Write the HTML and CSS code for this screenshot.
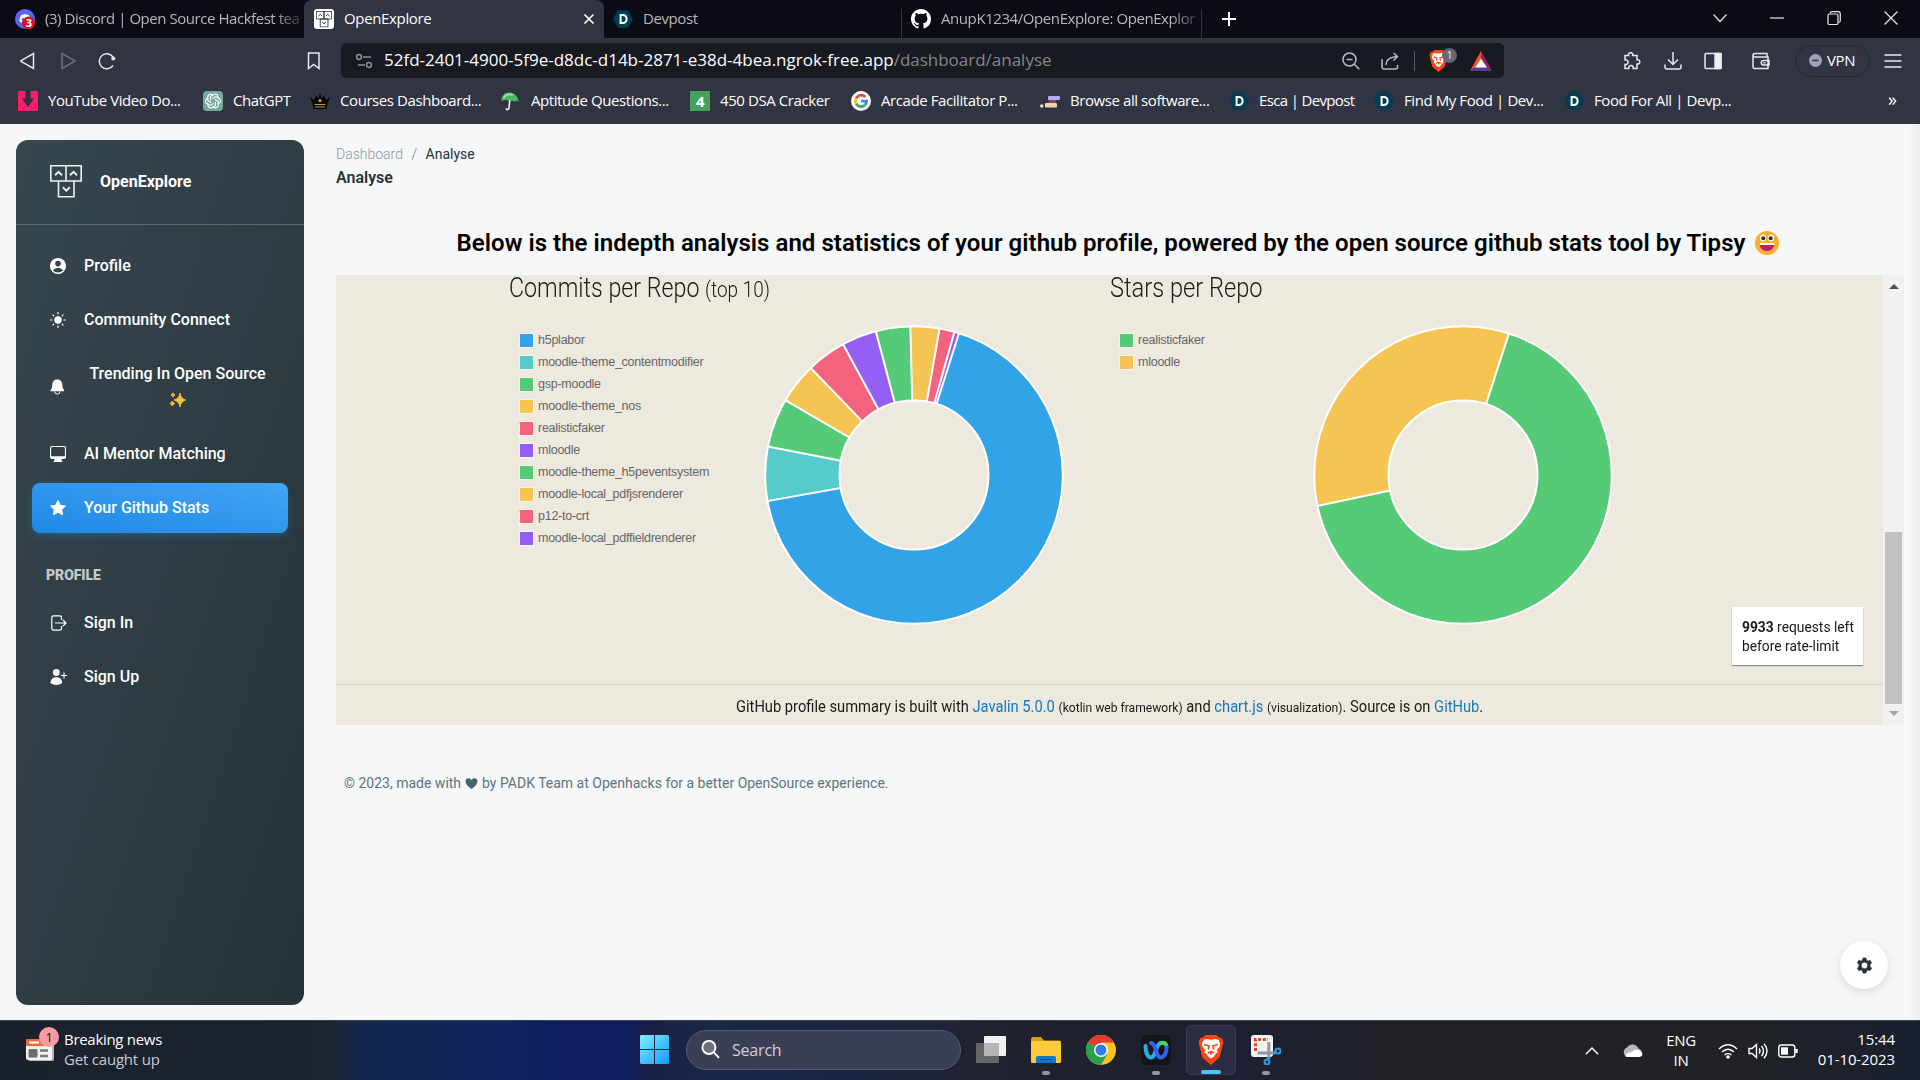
FILE: index.html
```html
<!DOCTYPE html>
<html lang="en">
<head>
<meta charset="utf-8">
<title>OpenExplore</title>
<link rel="stylesheet" href="styles.css">
</head>
<body>
<svg class="defs" width="0" height="0" aria-hidden="true">
  <symbol id="devpost" viewBox="0 0 20 20"><path d="M5 1.2h10L20 10l-5 8.800H5L0 10z" fill="#003e54"/><path d="M7.600 6v8h1.800c2.800 0 4.200-1.500 4.200-4s-1.400-4-4.200-4z" fill="none" stroke="#fff" stroke-width="2"/></symbol>
  <symbol id="logo" viewBox="0 0 32 33"><g fill="none" stroke="currentColor" stroke-width="1.600"><path d="M.8.8h15.200v15.200H.8zM16 .8h15.200v15.200H16zM8.500 16h15.500v15.800H8.500z"/><path d="M5 10.200l3.500-3.400 3.500 3.400M20 10.200l3.500-3.400 3.500 3.400M12.800 22.300l3.500 3.400 3.500-3.400" stroke-width="1.900"/></g></symbol>
  <symbol id="brave" viewBox="0 0 24 28"><path d="M7 0h10l2.500 2.200 2.500.8 1.500 3-.5 3-3 12L12 28 4 21 1 9 .5 6 2 3l2.500-.8z" fill="#fb4412"/><path d="M12 4.500l4-.8 3 .8 1.500 4-.5 2.500-2.500 3 .8 2-2 1.500-1.500 2.500L12 22l-2.800-2-1.500-2.500-2-1.500.8-2L4 11l-.5-2.500 1.500-4 3-.8z" fill="#fff"/><path d="M5.500 8.800l4.700 1.400-.8 3.300M18.500 8.800l-4.700 1.400.8 3.300M9 16.800l3-1.300 3 1.300M12 15.500v3" fill="none" stroke="#fb4412" stroke-width="1.500"/></symbol>
</svg>

<header class="browser">
  <div class="tabs">
    <div class="tab tab-first">
      <svg class="fav" viewBox="0 0 20 20"><circle cx="10" cy="10" r="10" fill="#5865f2"/><path d="M4.500 12.500c0-3 .8-5.500 2-6.500 2-1 5-1 7 0 1 1 2 3 2 6l-3 2H7z" fill="#fff"/><circle cx="7.800" cy="10.200" r="1.200" fill="#5865f2"/><circle cx="13.500" cy="14" r="6.500" fill="#d9131e"/><text x="10.800" y="18" class="badge-num">3</text></svg>
      <span class="tab-title">(3) Discord | Open Source Hackfest tea</span>
    </div>
    <div class="tab tab-active">
      <svg class="fav fav-logo" viewBox="0 0 20 20"><rect width="20" height="20" rx="3" fill="#fff"/><use href="#logo" x="2" y="2" width="16" height="16.500"/></svg>
      <span class="tab-title">OpenExplore</span>
      <svg class="tab-close" viewBox="0 0 12 12"><path d="M1.500 1.500l9 9M10.500 1.500l-9 9" stroke="#fff" stroke-width="1.700"/></svg>
    </div>
    <div class="tab tab-devpost">
      <svg class="fav"><use href="#devpost"/></svg>
      <span class="tab-title">Devpost</span>
    </div>
    <div class="tab tab-github">
      <svg class="fav" viewBox="0 0 16 16"><path fill="#fff" d="M8 0C3.580 0 0 3.580 0 8c0 3.540 2.290 6.530 5.470 7.590.4.070.55-.17.55-.38 0-.19-.01-.82-.01-1.490-2.010.37-2.530-.49-2.690-.94-.09-.23-.48-.94-.82-1.130-.28-.15-.68-.52-.01-.53.63-.01 1.080.58 1.230.82.72 1.210 1.870.87 2.330.66.070-.52.280-.87.510-1.070-1.780-.2-3.640-.89-3.640-3.950 0-.87.31-1.590.82-2.150-.08-.2-.36-1.020.08-2.120 0 0 .67-.21 2.200.82.640-.18 1.320-.27 2-.27s1.360.09 2 .27c1.530-1.040 2.200-.82 2.200-.82.44 1.100.16 1.920.08 2.120.51.560.82 1.270.82 2.150 0 3.070-1.870 3.750-3.650 3.950.29.25.54.730.54 1.480 0 1.070-.01 1.930-.01 2.200 0 .21.150.46.550.38A8.010 8.010 0 0016 8c0-4.420-3.580-8-8-8z"/></svg>
      <span class="tab-title">AnupK1234/OpenExplore: OpenExplor</span>
    </div>
    <svg class="tab-new" viewBox="0 0 16 16"><path d="M8 1v14M1 8h14" stroke="#fff" stroke-width="2"/></svg>
    <div class="window-controls">
      <svg viewBox="0 0 14 14"><path d="M.5 3.500L7 10.500l6.500-7"/></svg>
      <svg viewBox="0 0 14 14"><path d="M0 7h14"/></svg>
      <svg viewBox="0 0 14 14"><rect x="1" y="3" width="10" height="10.500" rx="1.500"/><path d="M3 2.500Q3.500.7 5 .7h6q2.300 0 2.300 2.300v6.500q0 1.500-1.500 2"/></svg>
      <svg viewBox="0 0 14 14"><path d="M.5.5l13 13M13.500.5l-13 13"/></svg>
    </div>
  </div>

  <div class="toolbar">
    <svg class="ti" viewBox="0 0 18 18"><path d="M14.500 1.500v15L2 9.300q-.5-.3 0-.6z"/></svg>
    <svg class="ti dim" viewBox="0 0 18 18"><path d="M2 1.500v15L14.500 9.300q.5-.3 0-.6z"/></svg>
    <svg class="ti" viewBox="0 0 18 18"><path d="M15 13.500A7.500 7.500 0 1 1 15.500 6"/><circle cx="15.300" cy="6.500" r="2" fill="#e8e8ee" stroke="none"/></svg>
    <svg class="ti" viewBox="0 0 18 18"><path d="M1.500 1h10.500v15.500l-5.200-4-5.300 4z"/></svg>
    <div class="urlbar">
      <svg class="ti gray" viewBox="0 0 18 18"><circle cx="4" cy="5" r="2.400"/><path d="M8 5h8M3 13h7"/><circle cx="14" cy="13" r="2.400"/></svg>
      <span class="url"><span class="host">52fd-2401-4900-5f9e-d8dc-d14b-2871-e38d-4bea.ngrok-free.app</span><span class="path">/dashboard/analyse</span></span>
      <svg class="ti light" viewBox="0 0 18 18"><circle cx="7.500" cy="7.500" r="6.500"/><path d="M4.500 7.500h6M12.300 12.300l5 5"/></svg>
      <svg class="ti light" viewBox="0 0 18 18"><path d="M1 7v8q0 2 2 2h11.500q2 0 2-2v-2M5 13c0-6 4-8 11-8.500M12.500 1l4 3.500-4 4"/></svg>
      <i class="sep"></i>
      <span class="shield"><svg viewBox="0 0 24 28"><use href="#brave"/></svg><b>1</b></span>
      <svg class="bat" viewBox="0 0 22 20"><path d="M11 0L0 20l5-3.500 6-9z" fill="#f9522b"/><path d="M11 0l11 20-5-3.500-6-9z" fill="#9e1f63"/><path d="M0 20h22l-5-4H5z" fill="#5b3a96"/><path d="M11 7.500L5 16.500h12z" fill="#fff"/></svg>
    </div>
    <svg class="ti" viewBox="0 0 18 18"><path d="M2 3.500h3.500a2.200 2.200 0 1 1 4.200 0H14v4.300a2.200 2.200 0 1 1 0 4.200V16.500H10.200a2.300 2.300 0 1 0-4.400 0H2v-4a2.400 2.400 0 1 0 0-4.600z"/></svg>
    <svg class="ti" viewBox="0 0 18 18"><path d="M9 0v12M4 7.500L9 12.500l5-5M1 12.500V15q0 2 2 2h12q2 0 2-2v-2.500"/></svg>
    <svg class="ti" viewBox="0 0 18 18"><rect x="1" y="1.500" width="16" height="15" rx="1"/><path d="M11 1.500h6v15h-6z" fill="#f2f2f6"/></svg>
    <svg class="ti" viewBox="0 0 18 18"><path d="M15 5V1.500H3q-2 0-2 2v11.500q0 1.500 1.500 1.500H16V5H3Q1 5 1 3.500M17 8.500h-5.500a2.200 2.200 0 0 0 0 4.500H17z"/><path d="M11.500 10.800h2"/></svg>
    <div class="vpn"><svg viewBox="0 0 14 14"><circle cx="7" cy="7" r="7" fill="#a1a2b8"/><path d="M3.500 7h7" stroke="#313442" stroke-width="1.600"/></svg><span>VPN</span></div>
    <svg class="ti" viewBox="0 0 18 18"><path d="M.5 3h17M.5 9h17M.5 15h17"/></svg>
  </div>

  <div class="bookmarks">
    <a><svg class="fav" viewBox="0 0 20 20"><rect width="20" height="20" rx="1" fill="#f81f68"/><path d="M7.500 0h5v7.500h3.500L10 16 4 7.500h3.500z" fill="#31303f"/></svg>YouTube Video Do...</a>
    <a><svg class="fav" viewBox="0 0 20 20"><rect width="20" height="20" rx="4" fill="#75a99b"/><g fill="none" stroke="#fff" stroke-width="1.100"><path id="petal" d="M10 4.200q-3.200-2.500-5.200.8v4.800l3.500 2"/><use href="#petal" transform="rotate(60 10 10)"/><use href="#petal" transform="rotate(120 10 10)"/><use href="#petal" transform="rotate(180 10 10)"/><use href="#petal" transform="rotate(240 10 10)"/><use href="#petal" transform="rotate(300 10 10)"/></g></svg>ChatGPT</a>
    <a><svg class="fav" viewBox="0 0 20 20"><path d="M4 18L0 6l4.500 3L6 4l2.500 4L10 1.500 11.500 8 14 4l1.500 5L20 6l-4 12z" fill="#07070a"/><path d="M4.500 13.500h11M5 16h10" stroke="#c7992a" stroke-width="1.200"/><circle cx="10" cy="9.500" r="1.500" fill="#d7a92b"/></svg>Courses Dashboard...</a>
    <a><svg class="fav" viewBox="0 0 20 20"><path d="M.5 10C0 5 4 1 9 1.500c5 .5 8 4 8.500 9.500-1.500-1.500-3-1.500-4.200-.3-1.500-1.700-3.500-1.700-4.800-.2C6.500 8.500 3.500 8.500.5 10z" fill="#4bb868"/><path d="M2.500 7C5 3 8 2.500 12 4" stroke="#9be5a5" stroke-width="1.800" fill="none"/><path d="M8.800 9l-.8 8q-1.200 3-3.200.5" fill="none" stroke="#e5ece8" stroke-width="1.700"/></svg>Aptitude Questions...</a>
    <a><i class="four">4</i>450 DSA Cracker</a>
    <a><svg class="fav" viewBox="0 0 20 20"><circle cx="10" cy="10" r="10" fill="#fff"/><g fill="none" stroke-width="2.700"><path d="M14.200 6A5.600 5.600 0 0 0 5.100 7.300" stroke="#ea4335"/><path d="M5.100 7.300a5.600 5.600 0 0 0 0 5.400" stroke="#fbbc05"/><path d="M5.100 12.700a5.600 5.600 0 0 0 8.600 1.500" stroke="#34a853"/><path d="M10 10.200h5.600q0 2.600-1.900 4" stroke="#4285f4"/></g></svg>Arcade Facilitator P...</a>
    <a><svg class="fav" viewBox="0 0 20 20"><rect x="8" y="5" width="12" height="4" rx="1" fill="#b9a7f0"/><path d="M9 9h7v3.500H8z" fill="#6a5464"/><rect x="5" y="12" width="12" height="4.500" rx="1" fill="#f4cfb0"/><circle cx="1.800" cy="15" r="1.800" fill="#eed5c6"/></svg>Browse all software...</a>
    <a class="tight"><svg class="fav"><use href="#devpost"/></svg>Esca | Devpost</a>
    <a><svg class="fav"><use href="#devpost"/></svg>Find My Food | Dev...</a>
    <a><svg class="fav"><use href="#devpost"/></svg>Food For All | Devp...</a>
    <span class="more">»</span>
  </div>
</header>

<div class="page">
  <aside class="sidebar">
    <div class="brand"><svg><use href="#logo"/></svg><span>OpenExplore</span></div>
    <nav>
      <a class="item"><svg viewBox="0 0 16 16"><circle cx="8" cy="8" r="8"/><g fill="#33434a"><circle cx="8" cy="5.600" r="2.800"/><path d="M2.900 12.500Q5 9.800 8 9.800t5.100 2.700Q11 14.500 8 14.500t-5.100-2z"/></g></svg><span>Profile</span></a>
      <a class="item"><svg viewBox="0 0 16 16"><circle cx="8" cy="8" r="3.700"/><path d="M8 0v2.500M8 13.500V16M0 8h2.500M13.500 8H16M2.600 2.600l1.600 1.600M11.800 11.800l1.600 1.600M2.600 13.400l1.600-1.600M11.800 4.200l1.600-1.600" stroke="#fff" stroke-width="1.100"/></svg><span>Community Connect</span></a>
      <a class="item tall"><svg viewBox="0 0 16 16"><path d="M7.300.5c-3 0-5 2-5 5.200 0 2.800-.6 3.800-1.800 5.500q-.3.800.6 1h12.400q.9-.2.600-1c-1.200-1.700-1.800-2.700-1.800-5.500 0-3.200-2-5.200-5-5.200z"/><path d="M4.700 12.500a2.600 2.600 0 0 0 5.200 0" fill="none" stroke="#fff"/></svg><span>Trending In Open Source <svg class="spark" viewBox="0 0 16 16"><path d="M10 1q.8 5.700 6 7-5.200 1.300-6 7-.8-5.700-6-7 5.200-1.300 6-7zM3 .8q.5 1.700 2 2.200-1.500.5-2 2.200-.5-1.700-2-2.200 1.500-.5 2-2.200zM2.300 9q.6 2 2.400 2.500-1.800.5-2.400 2.500-.6-2-2.400-2.500Q1.700 11 2.300 9z" fill="#fcc23c" stroke="#fcc23c" stroke-width=".8"/></svg></span></a>
      <a class="item"><svg viewBox="0 0 16 16"><path fill-rule="evenodd" d="M2 0h12q2 0 2 2v9q0 2-2 2h-2.500v1.500q1 .3 1 1.500h-9q0-1.200 1-1.500V13H2q-2 0-2-2V2q0-2 2-2zm-.9 2v8.200h13.800V2q0-.9-.9-.9H2q-.9 0-.9.900z"/></svg><span>AI Mentor Matching</span></a>
      <a class="item active"><svg viewBox="0 0 16 16"><path d="M8 .6l2.300 4.700 5.200.7-3.800 3.600.9 5.200L8 12.300l-4.600 2.500.9-5.200L.5 6l5.200-.7z" stroke="#fff" stroke-linejoin="round"/></svg><span>Your Github Stats</span></a>
      <h6>PROFILE</h6>
      <a class="item"><svg viewBox="0 0 16 16"><path d="M11.500 5V2.500q0-1.700-1.700-1.700H3.500Q1.800.8 1.800 2.500v11q0 1.700 1.700 1.700h6.300q1.700 0 1.700-1.700V11M5 8h11M13 5l3 3-3 3" fill="none" stroke="#fff" stroke-width="1.200"/></svg><span>Sign In</span></a>
      <a class="item"><svg viewBox="0 0 16 16"><circle cx="6.300" cy="3.500" r="3.400"/><path d="M.5 14C.5 10 3 8.200 6.300 8.200S12.200 10 12.200 14q-2.500 2-5.900 2T.5 14z"/><path d="M14 3.500v6M11 6.500h6" stroke="#fff" stroke-width="1.100"/></svg><span>Sign Up</span></a>
    </nav>
  </aside>

  <main>
    <div class="crumbs"><span>Dashboard</span><i>/</i><b>Analyse</b></div>
    <h5>Analyse</h5>
    <h1>Below is the indepth analysis and statistics of your github profile, powered by the open source github stats tool by Tipsy <svg viewBox="0 0 24 24"><circle cx="12" cy="12" r="12" fill="#fcae2c"/><ellipse cx="8" cy="7" rx="3" ry="3.500" fill="#fff"/><ellipse cx="16" cy="7" rx="3" ry="3.500" fill="#fff"/><circle cx="8.300" cy="7.300" r="2" fill="#402a32"/><circle cx="15.700" cy="7.300" r="2" fill="#402a32"/><path d="M4.500 12h15q-.5 8-7.500 8t-7.500-8z" fill="#bb1d80"/><path d="M4.500 12h15l-.4 2H4.900z" fill="#fff"/></svg></h1>

    <section class="frame">
      <div class="stats">
        <div class="charts">
          <div class="chart">
            <h2><span class="narrow n-commits">Commits per Repo</span><small class="narrow n-top">(top 10)</small></h2>
            <div class="row">
              <ul>
                <li class="blue">h5plabor</li><li class="teal">moodle-theme_contentmodifier</li><li class="green">gsp-moodle</li><li class="yellow">moodle-theme_nos</li><li class="red">realisticfaker</li><li class="purple">mloodle</li><li class="green">moodle-theme_h5peventsystem</li><li class="yellow">moodle-local_pdfjsrenderer</li><li class="red">p12-to-crt</li><li class="purple">moodle-local_pdffieldrenderer</li>
              </ul>
              <svg class="donut" viewBox="-150 -150 300 300">
                <g class="ring">
                  <circle r="111.500" pathLength="360" class="blue" stroke-dasharray="242.300 117.700" transform="rotate(17.600)"/>
                  <circle r="111.500" pathLength="360" class="teal" stroke-dasharray="21.100 338.900" transform="rotate(259.900)"/>
                  <circle r="111.500" pathLength="360" class="green" stroke-dasharray="19.200 340.800" transform="rotate(281)"/>
                  <circle r="111.500" pathLength="360" class="yellow" stroke-dasharray="15.800 344.200" transform="rotate(300.200)"/>
                  <circle r="111.500" pathLength="360" class="red" stroke-dasharray="15.500 344.500" transform="rotate(316)"/>
                  <circle r="111.500" pathLength="360" class="purple" stroke-dasharray="13.600 346.400" transform="rotate(331.500)"/>
                  <circle r="111.500" pathLength="360" class="green" stroke-dasharray="13.300 346.700" transform="rotate(345.100)"/>
                  <circle r="111.500" pathLength="360" class="yellow" stroke-dasharray="11.500 348.500" transform="rotate(358.400)"/>
                  <circle r="111.500" pathLength="360" class="red" stroke-dasharray="5.900 354.100" transform="rotate(9.900)"/>
                  <circle r="111.500" pathLength="360" class="purple" stroke-dasharray="1.800 358.200" transform="rotate(15.800)"/>
                </g>
                <g class="edges"><circle r="148.800"/><circle r="74.500"/>
                  <path d="M0-149V-74.500" transform="rotate(17.600)"/><path d="M0-149V-74.500" transform="rotate(259.900)"/><path d="M0-149V-74.500" transform="rotate(281)"/><path d="M0-149V-74.500" transform="rotate(300.200)"/><path d="M0-149V-74.500" transform="rotate(316)"/><path d="M0-149V-74.500" transform="rotate(331.500)"/><path d="M0-149V-74.500" transform="rotate(345.100)"/><path d="M0-149V-74.500" transform="rotate(358.600)"/><path d="M0-149V-74.500" transform="rotate(9.900)"/><path d="M0-149V-74.500" transform="rotate(15.800)"/></g>
              </svg>
            </div>
          </div>
          <div class="chart second">
            <h2><span class="narrow n-stars">Stars per Repo</span></h2>
            <div class="row">
              <ul><li class="green">realisticfaker</li><li class="yellow">mloodle</li></ul>
              <svg class="donut" viewBox="-150 -150 300 300">
                <g class="ring">
                  <circle r="111.500" pathLength="360" class="green" stroke-dasharray="240 120" transform="rotate(18)"/>
                  <circle r="111.500" pathLength="360" class="yellow" stroke-dasharray="120 240" transform="rotate(258)"/>
                </g>
                <g class="edges"><circle r="148.800"/><circle r="74.500"/><path d="M0-149V-74.500" transform="rotate(18)"/><path d="M0-149V-74.500" transform="rotate(258)"/></g>
              </svg>
            </div>
          </div>
        </div>
        <footer><p class="narrow n-foot">GitHub profile summary is built with <a>Javalin 5.0.0</a> <small>(kotlin web framework)</small> and <a>chart.js</a> <small>(visualization)</small>. Source is on <a>GitHub</a>.</p></footer>
        <div class="rate"><p class="narrow n-rate"><b>9933</b> requests left<br>before rate-limit</p></div>
      </div>
      <div class="scrollbar"><i class="up"></i><i class="thumb"></i><i class="down"></i></div>
    </section>

    <p class="copyright">© 2023, made with <svg viewBox="0 0 14 12"><path d="M7 12Q.5 7.500.5 3.500.8.500 3.700.3 6 .3 7 2.300 8 .3 10.300.3q2.900.2 3.200 3.200Q13.500 7.500 7 12z"/></svg> by PADK Team at Openhacks for a better OpenSource experience.</p>
  </main>
  <button class="gear"><svg viewBox="0 0 16 16"><path fill-rule="evenodd" d="M6.700 0h2.600l.5 2 1.500.9 2-.6 1.300 2.200-1.400 1.500v2l1.400 1.500-1.300 2.200-2-.6-1.500.9-.5 2H6.700l-.5-2-1.500-.9-2 .6-1.300-2.200L2.800 8V6L1.400 4.500l1.300-2.200 2 .6 1.500-.9zM8 3.800a3.200 3.200 0 1 0 0 6.400 3.200 3.200 0 0 0 0-6.400z" transform="translate(0 1)" stroke="#263238" stroke-width=".8" stroke-linejoin="round"/></svg></button>
</div>

<div class="taskbar">
  <div class="news">
    <span class="news-icon"><svg viewBox="0 0 28 22"><rect x="2" y="2" width="26" height="20" rx="2" fill="#b8b8b8"/><rect width="26" height="21" rx="2" fill="#f2f2f2"/><path d="M0 7V2q0-2 2-2h24v7z" fill="#f0653a"/><path d="M3 3.500h10" stroke="#fff" stroke-width="2.200"/><rect x="2.500" y="10" width="9" height="8.500" rx="1" fill="#6b6b6b"/><path d="M14 11.500h8M14 17h8" stroke="#777" stroke-width="2.600"/></svg><b>1</b></span>
    <div><p>Breaking news</p><p class="sub">Get caught up</p></div>
  </div>
  <div class="apps">
    <svg class="start" viewBox="0 0 29 29"><defs><linearGradient id="win" x1="0" y1="0" x2="1" y2="1"><stop offset="0" stop-color="#7fefff"/><stop offset="1" stop-color="#119bff"/></linearGradient></defs><path d="M1 0h13v14H0V1zM15 0h13l1 1v13H15zM0 15h14v14H1l-1-1zM15 15h14v13l-1 1H15z" fill="url(#win)"/></svg>
    <div class="search"><svg viewBox="0 0 18 18"><circle cx="7.500" cy="7" r="6.200"/><path d="M12 11.500l5 5.500"/></svg>Search</div>
    <span class="app"><svg viewBox="0 0 30 28"><rect y="7" width="23" height="20" rx="1" fill="#666"/><rect x="8" y="0" width="22" height="20" rx="1" fill="#f1f1f1"/><path d="M8 7h15v13H8z" fill="#b5b5b5"/></svg></span>
    <span class="app dot"><svg viewBox="0 0 30 28"><path d="M0 3q0-2 2-2h8l3 3.500h15q2 0 2 2V10H0z" fill="#dd9e10"/><rect y="5" width="30" height="22" rx="1.500" fill="#ffcb3c"/><path d="M5 27v-5q0-2 2-2h16q2 0 2 2v5z" fill="#1076c6"/><path d="M9 23.500h12" stroke="#0a4f8d"/></svg></span>
    <span class="app"><svg viewBox="0 0 30 30"><circle cx="15" cy="15" r="15" fill="#fcc31e"/><path d="M15 15L2 7.500A15 15 0 0 1 28 7.500H15z" fill="#e33b2e"/><path d="M2 7.500A15 15 0 0 0 15 30l6.500-11.300L15 15z" fill="#2da04c"/><circle cx="15" cy="15" r="7" fill="#fff"/><circle cx="15" cy="15" r="5.500" fill="#2f7de9"/></svg></span>
    <span class="app dot"><svg viewBox="0 0 30 30"><rect width="30" height="30" rx="6" fill="#151518"/><g fill="none" stroke-width="4" stroke-linecap="round"><path d="M4.500 11c0 6 2 11.500 5.500 11.500 5 0 4.500-14.500 10.500-14.500" stroke="#1fb4e4"/><path d="M20 8q5-1.500 5.500 3.500" stroke="#52d368"/><path d="M10 8c5 0 5 14.500 9.500 14.500 3.500 0 6-4 6-10" stroke="#3560f4"/></g></svg></span>
    <span class="app current"><svg viewBox="0 0 24 28"><use href="#brave"/></svg></span>
    <span class="app dot"><svg viewBox="0 0 30 30"><rect width="22" height="22" rx="3" fill="#f2f3f5"/><path d="M4.500 16V4.500H17" fill="none" stroke="#d74a24" stroke-width="3" stroke-dasharray="3 1.700"/><path d="M6.500 18H24M17.800 7v17" stroke="#93989f" stroke-width="3"/><g fill="none" stroke="#2c9fe0" stroke-width="2"><circle cx="27" cy="16" r="2.500"/><circle cx="16" cy="27" r="2.500"/><path d="M22 18l3-1.200M18 22l-1 3"/></g></svg></span>
  </div>
  <div class="tray">
    <svg class="chev" viewBox="0 0 14 8"><path d="M.8 7.200L7 1l6.200 6.200"/></svg>
    <svg class="cloud" viewBox="0 0 20 14"><path d="M5 13a5 5 0 0 1-.5-9.500A6.500 6.500 0 0 1 16 4.500 4.500 4.500 0 0 1 16 13z" fill="#b9b9b9"/><path d="M3 12.500Q4 8 8 8.500l4-2.500q6-1 8 4-.3 3-3.500 3H4.500z" fill="#fff"/></svg>
    <div class="lang"><p>ENG</p><p>IN</p></div>
    <svg class="tr" viewBox="0 0 20 16"><path d="M1 6Q10-2.500 19 6M4 9q6-5.500 12 0M6.500 12Q10 9 13.500 12" /><circle cx="10" cy="14" r="1.800" fill="#fff" stroke="none"/></svg>
    <svg class="tr" viewBox="0 0 20 16"><path d="M1 5.500h3L8.500 1.500v13L4 10.500H1zM11 5.500q2 2.500 0 5M13.500 3q4 5 0 10M16 .8q6 7 0 14.400"/></svg>
    <svg class="tr" viewBox="0 0 20 16"><rect x=".8" y="2" width="16" height="12" rx="2.500"/><rect x="3" y="4.300" width="7" height="7.400" fill="#fff" stroke="none"/><path d="M18.500 6v4" stroke-width="2.500"/></svg>
    <div class="clock"><p>15:44</p><p>01-10-2023</p></div>
  </div>
</div>
</body>
</html>
```
FILE: styles.css
```css
* { box-sizing: border-box; margin: 0; padding: 0; }
body { width: 1920px; height: 1080px; overflow: hidden; display: flex; flex-direction: column; font-family: Roboto, sans-serif; background: #f5f7f8; }
svg { display: block; flex: none; }
.defs { position: absolute; }

/* browser chrome */
.browser { height: 124px; flex: none; background: #313442; color: #fff; font: 15px "Open Sans", sans-serif; letter-spacing: -0.42px; white-space: nowrap; }
.tabs { height: 38px; background: #0b0b15; display: flex; }
.tab { display: flex; align-items: center; width: 300px; height: 38px; padding-left: 10px; color: #b6b6bd; }
.tab-first { width: 304px; padding-left: 15px; }
.tab-active { background: #313442; border-radius: 8px 8px 0 0; color: #fff; }
.tab-active .tab-title { font-weight: 500; letter-spacing: -0.35px; }
.tab-devpost { width: 297px; padding-left: 9px; }
.tab-github { width: 301px; border-left: 1px solid #33343e; border-right: 1px solid #33343e; height: 29px; margin-top: 9px; padding-bottom: 9px; padding-left: 9px; }
.tab-title { flex: 1; margin-left: 10px; padding-bottom: 2px; }
.tab-first .tab-title { letter-spacing: -0.45px; }
.tab-first .tab-title, .tab-github .tab-title { mask-image: linear-gradient(90deg, #000 88%, transparent 102%); }
.tab-close { width: 12px; height: 12px; margin-right: 9px; }
.tab-new { width: 16px; height: 16px; margin: 11px 0 0 19px; }
.fav { width: 20px; height: 20px; flex: none; }
.fav-logo { color: #222; }
.badge-num { font: bold 11px "Open Sans", sans-serif; fill: #fff; }
.window-controls { margin-left: auto; display: flex; gap: 43px; padding: 11px 22px 0 0; }
.window-controls svg { width: 14px; height: 14px; fill: none; stroke: #e8e8ee; stroke-width: 1.200; }
.toolbar { display: grid; grid-template-columns: 41px 38px 209px 34px 1282px 41px 40px 48px 43px 89px 20px; height: 45px; align-items: center; padding-left: 19px; }
.ti { width: 18px; height: 18px; fill: none; stroke: #e8e8ee; stroke-width: 1.500; }
.ti.dim { stroke: #70727e; }
.ti.gray { stroke: #8f9095; }
.ti.light { stroke: #b9babf; }
.urlbar { width: 1163px; height: 35px; border-radius: 5px; background: #171a21; display: flex; align-items: center; padding: 0 12px 0 14px; }
.url { flex: 1; margin-left: 11px; padding-bottom: 2px; font-size: 17px; letter-spacing: -0.01px; }
.path { color: #85878c; }
.urlbar .light { margin-right: 21px; }
.sep { width: 1px; height: 20px; background: #5a5c63; margin: 0 14px 0 -6px; }
.shield { position: relative; margin-right: 22px; }
.shield svg { width: 19px; height: 22px; }
.shield b { position: absolute; left: 13px; top: -2px; width: 15px; height: 15px; border-radius: 50%; background: #62677a; font: 10px/15px "Open Sans", sans-serif; text-align: center; }
.bat { width: 22px; height: 20px; }
.vpn { display: flex; align-items: center; gap: 5px; width: 75px; height: 32px; border: 1px solid #252733; border-radius: 16px; padding-left: 13px; font-size: 15px; }
.vpn span { padding-bottom: 2px; }
.vpn svg { width: 13px; height: 13px; }
.bookmarks { display: grid; grid-template-columns: 185px 107px 191px 189px 161px 189px 189px 145px 190px 324px auto; padding: 8px 0 0 18px; height: 41px; line-height: 18px; }
.bookmarks a { display: flex; gap: 10px; }
.bookmarks .tight { letter-spacing: -0.65px; }
.four { width: 20px; height: 20px; background: #43a35d; font: bold 15px/20px "Open Sans", sans-serif; text-align: center; }
.more { line-height: 16px; font-size: 18px; }

/* dashboard */
.page { flex: 1; display: flex; position: relative; background: linear-gradient(90deg, transparent 1908px, #eceef0 1920px), #f5f7f8; }
.sidebar { width: 288px; height: 865px; margin: 16px 0 0 16px; border-radius: 12px; background: linear-gradient(to bottom right, #37474f, #263238); color: #fff; }
.brand { height: 85px; border-bottom: 1px solid #5b696f; display: flex; align-items: center; gap: 18px; padding: 0 0 2px 34px; font-weight: 700; font-size: 16px; }
.brand svg { width: 32px; height: 33px; color: #eef1f2; }
nav { padding: 16px 16px; display: flex; flex-direction: column; gap: 4px; }
.item { height: 50px; display: flex; align-items: center; gap: 18px; padding-left: 18px; font: 500 16px/26px Roboto, sans-serif; border-radius: 8px; }
.item > svg { width: 16px; height: 16px; fill: #fff; overflow: visible; }
.item.tall { height: 76px; }
.tall span { width: 187px; text-align: center; }
.spark { display: block; width: 16px; height: 16px; margin: 5px auto; }
.active { background: linear-gradient(to top right, #1e88e5, #42a5f5); box-shadow: 0 3px 7px rgba(33, 150, 243, .25); }
h6 { font: 900 14px/20px Roboto, sans-serif; color: #c4c9cb; margin: 28px 0 9px 14px; letter-spacing: -0.05px; }
main { width: 1568px; margin-left: 32px; padding-top: 20px; }
.crumbs { font: 300 14px/20px Roboto, sans-serif; color: #263238; display: flex; gap: 8.500px; }
.crumbs span { color: #8f999e; }
.crumbs i { font-style: normal; color: #607d8b; }
.crumbs b { font-weight: 400; }
h5 { font: 600 16px/26px Roboto, sans-serif; color: #263238; margin-top: 1px; }
h1 { font: 600 24px/32px Roboto, sans-serif; letter-spacing: 0.04px; color: #000; margin: 36px 4px 0 0; display: flex; justify-content: center; align-items: center; gap: 10px; white-space: nowrap; }
h1 svg { width: 24px; height: 24px; }
.frame { height: 450px; margin-top: 16px; display: flex; }
.stats { position: relative; width: 1547px; background: #ede9de; color: #1a1a1a; }
.charts { height: 410px; border-bottom: 1px solid #d6d2c8; display: flex; padding-left: 174px; }
.chart { width: 600px; }
.second { width: 520px; }
h2 { height: 50px; font: 300 27px/27px Roboto, sans-serif; display: flex; align-items: baseline; }
.narrow { display: block; white-space: nowrap; transform-origin: 0 50%; transform: scaleX(.86); }
.n-commits { width: 196px; margin-left: -1px; }
.narrow.n-stars { transform: scaleX(.875); }
.narrow.n-foot { transform: scaleX(.918); }
.narrow.n-rate { transform: scaleX(.92); }
h2 small { font-size: 22px; }
.row { display: flex; justify-content: space-between; }
ul { list-style: none; padding: 4px 0 0 9px; }
li { display: flex; gap: 4px; align-items: center; height: 22px; font: 12.500px "Liberation Sans", Arial, sans-serif; color: #666; letter-spacing: -0.25px; }
li::before { content: ""; width: 13px; height: 13px; border: 1px solid #f6f4ee; background: var(--c); margin-top: 1px; }
.blue { --c: #32a3e6; } .teal { --c: #56cbcb; } .green { --c: #55cb77; } .yellow { --c: #f6c453; } .red { --c: #f3637e; } .purple { --c: #955ff5; }
.donut { width: 300px; height: 300px; margin-right: 46px; }
.second .donut { margin-right: 17px; }
.ring circle { fill: none; stroke: var(--c); stroke-width: 74.500; }
.ring { transform: rotate(-90deg); }
.edges { fill: none; stroke: #fff; stroke-width: 2; }
.stats footer { font: 400 16px/24px Roboto, sans-serif; padding: 10px 0 0 400px; }
.stats footer small { font-size: 13.200px; }
.stats footer a { color: #1378c4; }
.rate { position: absolute; right: 20px; bottom: 60px; width: 131px; height: 58px; background: #fff; padding: 11px 10px; font: 400 15px/19px Roboto, sans-serif; box-shadow: 0 1px 1px rgba(0, 0, 0, .4); }
.rate b { font-weight: 700; }
.scrollbar { width: 21px; background: #f1f1f1; display: flex; flex-direction: column; align-items: center; }
.up { border: 5px solid transparent; border-top: 0; border-bottom: 5px solid #505050; margin-top: 9px; }
.thumb { width: 17px; height: 172px; background: #c1c1c1; margin-top: 243px; }
.down { border: 5px solid transparent; border-bottom: 0; border-top: 5px solid #a3a3a3; margin-top: 7px; }
.copyright { margin: 48px 0 0 8px; font: 14px/20px Roboto, sans-serif; color: #607480; display: flex; gap: 4px; align-items: center; }
.copyright svg { width: 13px; height: 11px; fill: #47636f; }
.gear { position: absolute; left: 1840px; top: 817px; width: 48px; height: 48px; border: 0; border-radius: 50%; background: #fff; box-shadow: 0 3px 8px rgba(0, 0, 0, .12); display: flex; align-items: center; justify-content: center; }
.gear svg { width: 17px; height: 17px; fill: #263238; }

/* taskbar */
.taskbar { height: 60px; flex: none; position: relative; display: flex; justify-content: space-between; border-top: 1px solid #3c4249; color: #fff; font: 15px/20px "Open Sans", sans-serif; letter-spacing: -0.3px; background: linear-gradient(90deg, #1b212c 0, #1b2430 330px, #11264f 365px, #11245a 480px, #0f1f62 560px, #0f1f62 625px, #1b1f45 650px, #182849 710px, #1b2440 860px, #20222e 980px, #1e2031 1240px, #202126 1400px, #202226 1750px, #192030 1920px); }
.news { display: flex; width: 400px; padding: 8px 0 0 26px; gap: 10px; }
.news-icon { position: relative; width: 28px; }
.news-icon svg { width: 28px; height: 22px; margin-top: 10px; }
.news-icon b { position: absolute; left: 13px; top: -2px; width: 20px; height: 20px; border-radius: 50%; background: #ff99a4; color: #111; font: 13px/20px "Open Sans", sans-serif; text-align: center; }
.sub { color: #c8cace; letter-spacing: -0.2px; }
.apps { position: absolute; left: 640px; top: -1px; height: 59px; display: flex; align-items: center; }
.start { width: 29px; height: 29px; }
.search { display: flex; align-items: center; gap: 12px; width: 275px; height: 40px; margin: 0 5px 0 17px; border: 1px solid #565970; border-radius: 20px; background: #3b3f56; padding-left: 14px; color: #cfd0d6; font-size: 16px; letter-spacing: -0.2px; }
.search svg { width: 19px; height: 19px; fill: #6b6f80; stroke: #fff; stroke-width: 1.800; }
.app { position: relative; width: 50px; height: 50px; margin-right: 5px; border-radius: 5px; display: flex; align-items: center; justify-content: center; }
.app svg { width: 30px; height: 30px; }
.current { background: #2b2d43; border: 1px solid #3a3b50; }
.dot::after, .current::after { content: ""; position: absolute; bottom: 0; left: 21px; width: 8px; height: 4px; border-radius: 2px; background: #9496a0; }
.current::after { left: 14px; width: 20px; background: #4cc2ff; }
.tray { display: flex; align-items: center; padding-right: 25px; text-align: center; }
.tray svg { fill: none; stroke: #fff; stroke-width: 1.400; }
.chev { width: 14px; height: 8px; margin-right: 23px; }
.tray .cloud { width: 21px; height: 14px; margin-right: 23px; stroke: none; }
.lang { width: 30px; margin-right: 22px; padding-bottom: 2px; }
.tr { width: 20px; height: 16px; margin-right: 10px; }
.clock { text-align: right; width: 87px; padding-bottom: 3px; letter-spacing: -0.1px; }
```
